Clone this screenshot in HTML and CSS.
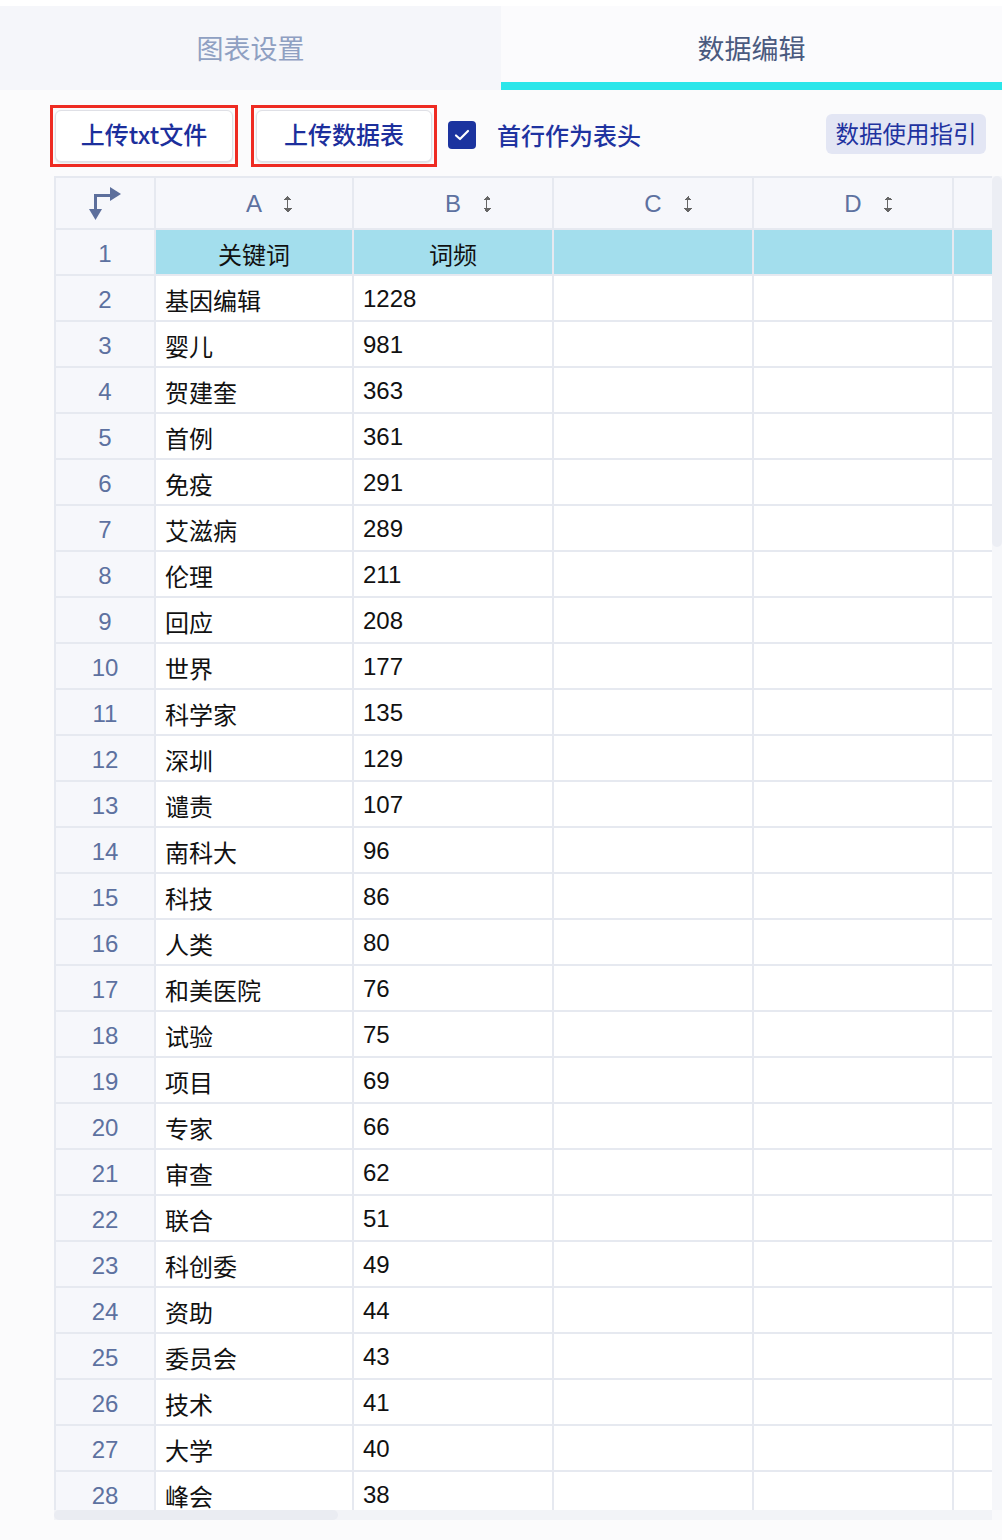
FILE: index.html
```html
<!DOCTYPE html>
<html lang="zh-CN">

<head>
    <meta charset="UTF-8">
    <title>数据编辑</title>
    <link rel="stylesheet" href="styles.css">
</head>

<body>
    <div class="tabs">
        <div class="tab">图表设置</div>
        <div class="tab active">数据编辑</div>
    </div>

    <div class="panel">
        <div class="toolbar">
            <div class="mark"><button class="btn">上传txt文件</button></div>
            <div class="mark"><button class="btn">上传数据表</button></div>
            <label class="check">
                <span class="box">
                    <svg width="16" height="12" viewBox="0 0 16 12"><path d="M2 6.5 L6 10 L14 2" fill="none" stroke="#fff" stroke-width="2.2" stroke-linecap="round" stroke-linejoin="round"/></svg>
                </span>
                首行作为表头
            </label>
            <a href="#" class="guide">数据使用指引</a>
        </div>

        <div class="sheet-wrap">
            <div class="sheet-view">
                <div class="sheet">
                    <div class="corner">
                        <svg width="34" height="36" viewBox="0 0 34 36"><path d="M6 9 H22 V12 H9 V24 H6 Z" fill="#5d6f9c"/><path d="M22 2 L33 9 L22 16 Z" fill="#5d6f9c"/><path d="M1 24 H14 L7.5 35 Z" fill="#5d6f9c"/></svg>
                    </div>
                    <div class="col">A<span class="sort"></span></div>
                    <div class="col">B<span class="sort"></span></div>
                    <div class="col">C<span class="sort"></span></div>
                    <div class="col">D<span class="sort"></span></div>
                    <div class="col"></div>

                    <div class="idx">1</div><div class="cell head">关键词</div><div class="cell head">词频</div><div class="cell head"></div><div class="cell head"></div><div class="cell head"></div>
                    <div class="idx">2</div><div class="cell">基因编辑</div><div class="cell">1228</div><div class="cell"></div><div class="cell"></div><div class="cell"></div>
                    <div class="idx">3</div><div class="cell">婴儿</div><div class="cell">981</div><div class="cell"></div><div class="cell"></div><div class="cell"></div>
                    <div class="idx">4</div><div class="cell">贺建奎</div><div class="cell">363</div><div class="cell"></div><div class="cell"></div><div class="cell"></div>
                    <div class="idx">5</div><div class="cell">首例</div><div class="cell">361</div><div class="cell"></div><div class="cell"></div><div class="cell"></div>
                    <div class="idx">6</div><div class="cell">免疫</div><div class="cell">291</div><div class="cell"></div><div class="cell"></div><div class="cell"></div>
                    <div class="idx">7</div><div class="cell">艾滋病</div><div class="cell">289</div><div class="cell"></div><div class="cell"></div><div class="cell"></div>
                    <div class="idx">8</div><div class="cell">伦理</div><div class="cell">211</div><div class="cell"></div><div class="cell"></div><div class="cell"></div>
                    <div class="idx">9</div><div class="cell">回应</div><div class="cell">208</div><div class="cell"></div><div class="cell"></div><div class="cell"></div>
                    <div class="idx">10</div><div class="cell">世界</div><div class="cell">177</div><div class="cell"></div><div class="cell"></div><div class="cell"></div>
                    <div class="idx">11</div><div class="cell">科学家</div><div class="cell">135</div><div class="cell"></div><div class="cell"></div><div class="cell"></div>
                    <div class="idx">12</div><div class="cell">深圳</div><div class="cell">129</div><div class="cell"></div><div class="cell"></div><div class="cell"></div>
                    <div class="idx">13</div><div class="cell">谴责</div><div class="cell">107</div><div class="cell"></div><div class="cell"></div><div class="cell"></div>
                    <div class="idx">14</div><div class="cell">南科大</div><div class="cell">96</div><div class="cell"></div><div class="cell"></div><div class="cell"></div>
                    <div class="idx">15</div><div class="cell">科技</div><div class="cell">86</div><div class="cell"></div><div class="cell"></div><div class="cell"></div>
                    <div class="idx">16</div><div class="cell">人类</div><div class="cell">80</div><div class="cell"></div><div class="cell"></div><div class="cell"></div>
                    <div class="idx">17</div><div class="cell">和美医院</div><div class="cell">76</div><div class="cell"></div><div class="cell"></div><div class="cell"></div>
                    <div class="idx">18</div><div class="cell">试验</div><div class="cell">75</div><div class="cell"></div><div class="cell"></div><div class="cell"></div>
                    <div class="idx">19</div><div class="cell">项目</div><div class="cell">69</div><div class="cell"></div><div class="cell"></div><div class="cell"></div>
                    <div class="idx">20</div><div class="cell">专家</div><div class="cell">66</div><div class="cell"></div><div class="cell"></div><div class="cell"></div>
                    <div class="idx">21</div><div class="cell">审查</div><div class="cell">62</div><div class="cell"></div><div class="cell"></div><div class="cell"></div>
                    <div class="idx">22</div><div class="cell">联合</div><div class="cell">51</div><div class="cell"></div><div class="cell"></div><div class="cell"></div>
                    <div class="idx">23</div><div class="cell">科创委</div><div class="cell">49</div><div class="cell"></div><div class="cell"></div><div class="cell"></div>
                    <div class="idx">24</div><div class="cell">资助</div><div class="cell">44</div><div class="cell"></div><div class="cell"></div><div class="cell"></div>
                    <div class="idx">25</div><div class="cell">委员会</div><div class="cell">43</div><div class="cell"></div><div class="cell"></div><div class="cell"></div>
                    <div class="idx">26</div><div class="cell">技术</div><div class="cell">41</div><div class="cell"></div><div class="cell"></div><div class="cell"></div>
                    <div class="idx">27</div><div class="cell">大学</div><div class="cell">40</div><div class="cell"></div><div class="cell"></div><div class="cell"></div>
                    <div class="idx">28</div><div class="cell">峰会</div><div class="cell">38</div><div class="cell"></div><div class="cell"></div><div class="cell"></div>
                </div>
            </div>
            <div class="vbar"><div class="thumb"></div></div>
            <div class="hbar"><div class="thumb"></div></div>
            <div class="gap"></div>
        </div>
    </div>
</body>

</html>
```

FILE: styles.css
```css
* {
    padding: 0;
    margin: 0;
    box-sizing: border-box;
}

body {
    background: #fff;
    font-family: "Liberation Sans", "Noto Sans CJK SC", sans-serif;
    width: 1002px;
    height: 1540px;
    overflow: hidden;
}

/* tabs */
.tabs {
    display: flex;
    margin-top: 6px;
}

.tab {
    flex: 1;
    height: 84px;
    display: flex;
    align-items: center;
    justify-content: center;
    padding-bottom: 2px;
    font-size: 27px;
    color: #8fa0c2;
    background: #f5f6fa;
}

.tab.active {
    color: #4a5a7f;
    background: #fbfbfd;
    box-shadow: inset 0 -8px 0 #2ae6ea;
}

.panel {
    background: #fbfbfc;
    height: 1450px;
}

/* toolbar */
.toolbar {
    display: flex;
    align-items: center;
    padding: 15px 16px 9px 50px;
}

.mark {
    border: 3px solid #ee2b22;
    padding: 2px;
    margin-right: 13px;
}

.mark + .mark {
    margin-right: 11px;
}

.btn {
    width: 178px;
    height: 52px;
    padding-bottom: 5px;
    background: #fff;
    border: 1px solid #dfe0e6;
    border-radius: 6px;
    box-shadow: 0 1px 2px rgba(0, 0, 0, .12);
    font: 500 24px "Noto Sans CJK SC", "Liberation Sans", sans-serif;
    color: #1c2f9c;
}

.mark + .mark .btn {
    width: 176px;
}

.check {
    display: flex;
    align-items: center;
    margin-top: -4px;
    font-family: "Noto Sans CJK SC", sans-serif;
    font-size: 24px;
    font-weight: 500;
    color: #1f33a0;
}

.check .box {
    width: 28px;
    height: 28px;
    border-radius: 4px;
    background: #1b339f;
    display: flex;
    align-items: center;
    justify-content: center;
    margin: 2px 21px 0 0;
}

.guide {
    margin-left: auto;
    width: 160px;
    height: 40px;
    margin-top: -4px;
    padding-bottom: 3px;
    border-radius: 6px;
    background: #e3e6f4;
    color: #1f33a0;
    font-size: 23.5px;
    text-decoration: none;
    display: flex;
    align-items: center;
    justify-content: center;
}

/* sheet */
.sheet-wrap {
    display: grid;
    grid-template-columns: 938px 10px;
    grid-template-rows: 1334px 10px;
    margin-left: 54px;
}

.sheet-view {
    overflow: hidden;
}

.sheet {
    display: grid;
    grid-template-columns: 98px 196px repeat(4, 198px);
    grid-template-rows: 50px;
    grid-auto-rows: 44px;
    gap: 2px;
    padding: 2px;
    width: max-content;
    background: #e6e9f0;
    font-size: 24px;
}

.corner,
.col,
.idx {
    background: #f6f7fb;
    color: #5d71a0;
}

.corner {
    display: flex;
    align-items: center;
    justify-content: center;
}

.col {
    display: grid;
    grid-template-columns: 1fr auto 1fr;
    align-items: center;
    padding-top: 2px;
}

.col::before {
    content: "";
}

.sort {
    justify-self: start;
    width: 8px;
    height: 16px;
    margin-left: 22px;
    background:
        linear-gradient(#666, #666) center 3px / 1.4px 10px no-repeat,
        conic-gradient(from 135deg at 50% 0, #666 90deg, transparent 0) 0 0 / 8px 4px no-repeat,
        conic-gradient(from -45deg at 50% 100%, #666 90deg, transparent 0) 0 12px / 8px 4px no-repeat;
}

.idx {
    display: flex;
    align-items: center;
    justify-content: center;
    padding-top: 3px;
}

.cell {
    background: #fff;
    color: #111;
    display: flex;
    align-items: center;
    padding: 2px 0 0 9px;
}

.cell.head {
    background: #a3deed;
    justify-content: center;
    padding-left: 0;
}

/* fake scrollbars */
.vbar {
    background: #f6f7fa;
}

.vbar .thumb {
    height: 371px;
    background: #eceef4;
    border-radius: 5px;
}

.hbar {
    background: #f2f3f7;
}

.hbar .thumb {
    width: 284px;
    height: 10px;
    background: #eaecf2;
    border-radius: 5px;
}

.gap {
    background: #f9f9fb;
}
```
